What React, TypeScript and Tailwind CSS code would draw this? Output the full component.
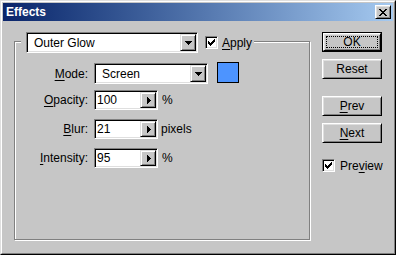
const sunken =
  "border border-t-[#808080] border-l-[#808080] border-r-white border-b-white shadow-[inset_1px_1px_0_#000,inset_-1px_-1px_0_#dfdfdf] p-px"
const raisedSmall =
  "border border-t-[#dfdfdf] border-l-[#dfdfdf] border-r-black border-b-black shadow-[inset_1px_1px_0_#fff,inset_-1px_-1px_0_#808080]"
const raised =
  "border border-t-white border-l-white border-r-black border-b-black shadow-[inset_1px_1px_0_#dfdfdf,inset_-1px_-1px_0_#808080]"

function DownArrow() {
  return (
    <svg width="7" height="4" viewBox="0 0 7 4" shapeRendering="crispEdges">
      <path d="M0 0h7v1H0z M1 1h5v1H1z M2 2h3v1H2z M3 3h1v1H3z" fill="#000" />
    </svg>
  )
}

function RightArrow() {
  return (
    <svg width="4" height="7" viewBox="0 0 4 7" shapeRendering="crispEdges">
      <path d="M0 0h1v7H0z M1 1h1v5H1z M2 2h1v3H2z M3 3h1v1H3z" fill="#000" />
    </svg>
  )
}

function Check() {
  return (
    <svg width="7" height="7" viewBox="0 0 7 7" shapeRendering="crispEdges">
      <path
        d="M6 0h1v1H6z M5 1h2v1H5z M0 2h1v1H0z M4 2h3v1H4z M0 3h2v1H0z M3 3h3v1H3z M0 4h5v1H0z M1 5h3v1H1z M2 6h1v1H2z"
        fill="#000"
      />
    </svg>
  )
}

function Checkbox() {
  return (
    <div className={`${sunken} w-[13px] h-[13px] bg-white flex items-center justify-center shrink-0`}>
      <Check />
    </div>
  )
}

function Combo({ value, width }: { value: string; width: string }) {
  return (
    <div className={`${sunken} ${width} h-[21px] bg-white flex shrink-0`}>
      <div className="flex-1 pl-[6px] flex items-center bg-white">{value}</div>
      <div className={`${raisedSmall} w-[16px] h-full bg-[#c6c6c6] flex items-center justify-center`}>
        <DownArrow />
      </div>
    </div>
  )
}

function Spin({ value }: { value: string }) {
  return (
    <div className={`${sunken} w-[64px] h-[20px] bg-white flex shrink-0`}>
      <div className="flex-1 pl-px flex items-center bg-white">{value}</div>
      <div className={`${raisedSmall} w-[16px] h-full bg-[#c6c6c6] flex items-center justify-center pl-px`}>
        <RightArrow />
      </div>
    </div>
  )
}

function Label({ k, rest }: { k: string; rest: string }) {
  return (
    <div className="w-[73px] text-right shrink-0">
      <span className="underline underline-offset-2">{k}</span>
      {rest}
    </div>
  )
}

function Button({ children, def }: { children: React.ReactNode; def?: boolean }) {
  if (def) {
    return (
      <div className="w-[60px] h-[20px] border border-black">
        <div className={`${raised} w-full h-full p-[2px]`}>
          <div className="w-full h-full border border-dotted border-black flex items-center justify-center">
            {children}
          </div>
        </div>
      </div>
    )
  }
  return (
    <div className={`${raised} w-[60px] h-[20px] flex items-center justify-center`}>{children}</div>
  )
}

export default function App() {
  return (
    <div className="w-[396px] h-[255px] border border-t-[#dfdfdf] border-l-[#dfdfdf] border-r-black border-b-black font-['Liberation_Sans',Arial,sans-serif] text-[12px] leading-none text-black">
      <div className="w-full h-full border border-t-white border-l-white border-r-[#808080] border-b-[#808080] bg-[#c6c6c6] p-px flex flex-col">
        {/* Title bar */}
        <div className="h-[18px] shrink-0 flex items-center justify-between pl-[3px] pr-[2px] bg-gradient-to-r from-[#0a246a] to-[#a6caf0]">
          <span className="text-white font-bold">Effects</span>
          <div className={`${raised} w-[16px] h-[14px] bg-[#c6c6c6] flex items-center justify-center`}>
            <svg width="8" height="7" viewBox="0 0 8 7" shapeRendering="crispEdges">
              <path
                d="M0 0h2v1H0z M6 0h2v1H6z M1 1h2v1H1z M5 1h2v1H5z M2 2h4v1H2z M3 3h2v1H3z M2 4h4v1H2z M1 5h2v1H1z M5 5h2v1H5z M0 6h2v1H0z M6 6h2v1H6z"
                fill="#000"
              />
            </svg>
          </div>
        </div>

        {/* Body */}
        <div className="flex items-start pt-[11px] pl-[11px]">
          {/* Group box */}
          <div className="mt-[9px] w-[296px] h-[199px] border border-[#808080] shadow-[inset_1px_1px_0_#fff,1px_1px_0_#fff] shrink-0">
            <div className="-mt-[10px] ml-[6px] pl-[5px] pr-[2px] bg-[#c6c6c6] flex w-fit items-center h-[21px]">
              <Combo value="Outer Glow" width="w-[172px]" />
              <div className="ml-[7px]">
                <Checkbox />
              </div>
              <span className="ml-[4px]">
                <span className="underline underline-offset-2">A</span>pply
              </span>
            </div>

            <div className="mt-[10px] flex items-center h-[21px]">
              <Label k="M" rest="ode:" />
              <div className="ml-[6px]">
                <Combo value="Screen" width="w-[114px]" />
              </div>
              <div className="ml-[9px] -mt-[2px] w-[22px] h-[21px] border border-black bg-[#4d94ff]" />
            </div>

            <div className="mt-[6px] flex items-center h-[20px]">
              <Label k="O" rest="pacity:" />
              <div className="ml-[6px]">
                <Spin value="100" />
              </div>
              <span className="ml-[4px]">%</span>
            </div>

            <div className="mt-[9px] flex items-center h-[20px]">
              <Label k="B" rest="lur:" />
              <div className="ml-[6px]">
                <Spin value="21" />
              </div>
              <span className="ml-[3px]">pixels</span>
            </div>

            <div className="mt-[9px] flex items-center h-[20px]">
              <Label k="I" rest="ntensity:" />
              <div className="ml-[6px]">
                <Spin value="95" />
              </div>
              <span className="ml-[4px]">%</span>
            </div>
          </div>

          {/* Buttons */}
          <div className="ml-[12px] flex flex-col">
            <Button def>OK</Button>
            <div className="mt-[7px]">
              <Button>Reset</Button>
            </div>
            <div className="mt-[17px]">
              <Button>
                <span className="underline underline-offset-2">P</span>rev
              </Button>
            </div>
            <div className="mt-[7px]">
              <Button>
                <span className="underline underline-offset-2">N</span>ext
              </Button>
            </div>
            <div className="mt-[16px] flex items-center">
              <Checkbox />
              <span className="ml-[5px]">
                Pre<span className="underline underline-offset-2">v</span>iew
              </span>
            </div>
          </div>
        </div>
      </div>
    </div>
  )
}
